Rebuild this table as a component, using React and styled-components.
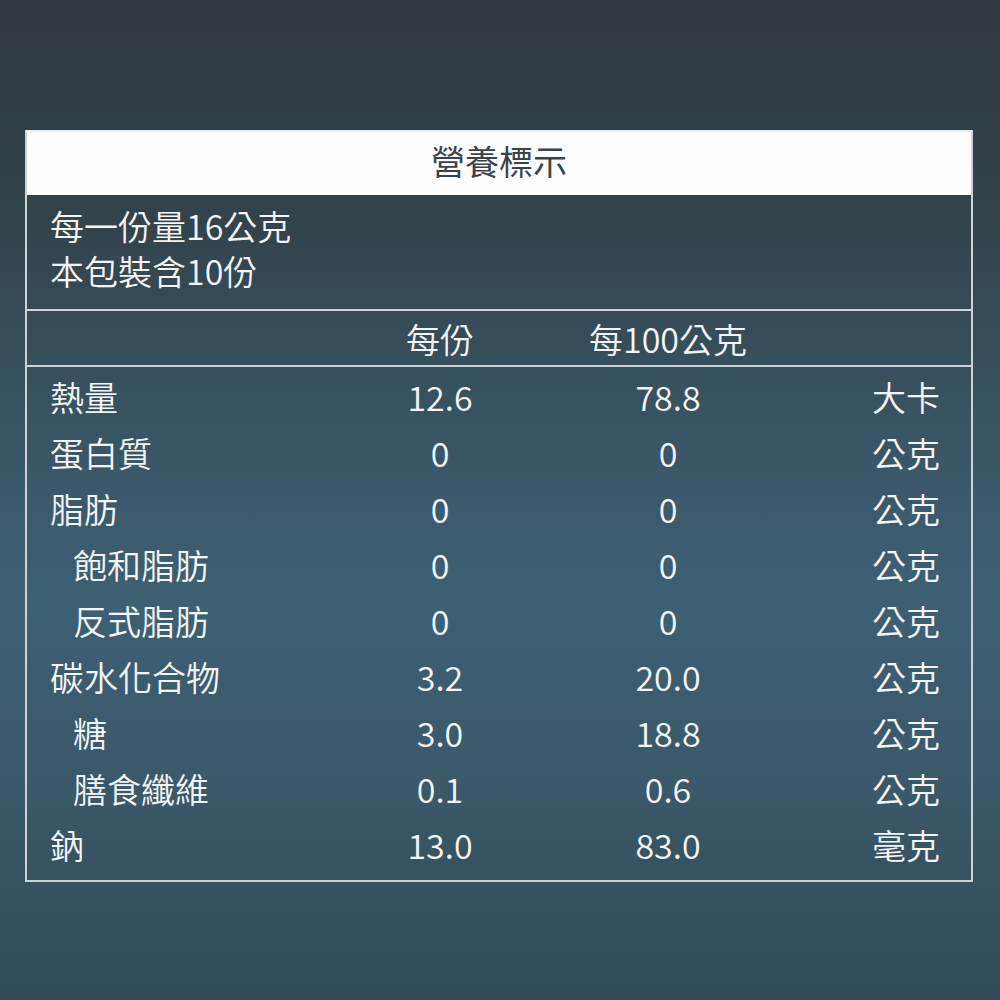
import React from "react";
import styled, { createGlobalStyle } from "styled-components";

const Global = createGlobalStyle`
  html, body { margin: 0; padding: 0; }
  body { font-family: "Noto Sans CJK TC", "Noto Sans", sans-serif; }
`;

const Page = styled.div`
  width: 1000px;
  height: 1000px;
  box-sizing: border-box;
  padding: 130px 27px 0 25px;
  background: linear-gradient(180deg, #2e383f 0%, #33434c 22%, #3a5666 45%, #3d6073 60%, #3a5868 80%, #314956 100%);
  color: #f3f5f6;
  font-family: "Noto Sans CJK TC", "Noto Sans", sans-serif;
  font-weight: 350;
`;

const Panel = styled.div`
  border: 2px solid #cbd3d7;
  border-top-color: #e9eced;
`;

const Title = styled.div`
  height: 63px;
  background: #fdfdfd;
  color: #3a424a;
  font-size: 34px;
  font-weight: 400;
  display: flex;
  align-items: center;
  justify-content: center;
  padding-bottom: 7px;
  box-sizing: border-box;
`;

const Info = styled.div`
  padding: 8px 23px 0;
  height: 106px;
  font-size: 34px;
  line-height: 45px;
  border-bottom: 2px solid #cdd5d9;
`;

const Grid = styled.div`
  display: grid;
  grid-template-columns: 290px 200px 256px 1fr;
  align-items: center;
  height: ${(p) => p.$h || 56}px;
  padding: 0 31px 0 23px;
  font-size: 34px;
`;

const HeaderRow = styled(Grid)`
  border-bottom: 2px solid #cdd5d9;
`;

const Body = styled.div`
  padding: 1px 0 8px;
`;

const Label = styled.div`
  padding-left: ${(p) => (p.$indent ? 23 : 0)}px;
  white-space: nowrap;
`;

const Num = styled.div`
  text-align: center;
  white-space: nowrap;
`;

const Unit = styled.div`
  text-align: right;
  white-space: nowrap;
`;

const rows = [
  ["熱量", "12.6", "78.8", "大卡", false],
  ["蛋白質", "0", "0", "公克", false],
  ["脂肪", "0", "0", "公克", false],
  ["飽和脂肪", "0", "0", "公克", true],
  ["反式脂肪", "0", "0", "公克", true],
  ["碳水化合物", "3.2", "20.0", "公克", false],
  ["糖", "3.0", "18.8", "公克", true],
  ["膳食纖維", "0.1", "0.6", "公克", true],
  ["鈉", "13.0", "83.0", "毫克", false],
];

export default function App() {
  return (
    <Page>
      <Global />
      <Panel>
        <Title>營養標示</Title>
        <Info>
          <div>每一份量16公克</div>
          <div>本包裝含10份</div>
        </Info>
        <HeaderRow $h={54}>
          <Label />
          <Num>每份</Num>
          <Num>每100公克</Num>
          <Unit />
        </HeaderRow>
        <Body>
          {rows.map(([l, a, b, u, ind]) => (
            <Grid key={l}>
              <Label $indent={ind}>{l}</Label>
              <Num>{a}</Num>
              <Num>{b}</Num>
              <Unit>{u}</Unit>
            </Grid>
          ))}
        </Body>
      </Panel>
    </Page>
  );
}
